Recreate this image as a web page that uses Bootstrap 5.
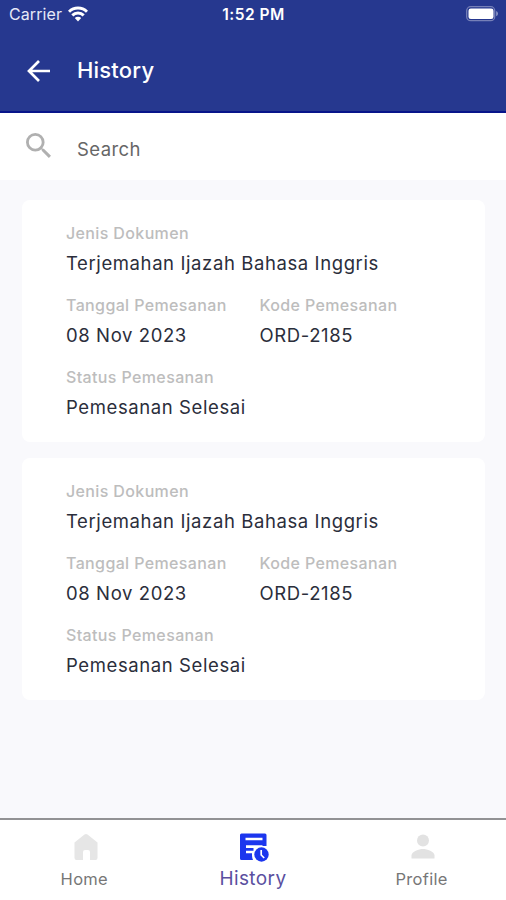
<!DOCTYPE html>
<html lang="id">
<head>
<meta charset="utf-8">
<meta name="viewport" content="width=device-width, initial-scale=1">
<title>History</title>
<link href="https://cdn.jsdelivr.net/npm/bootstrap@5.3.0/dist/css/bootstrap.min.css" rel="stylesheet">
<style>
body{font-family:Inter,"Liberation Sans",sans-serif;background:#f9f9fc;height:900px;overflow:hidden}
svg{display:block;flex:none}
.top-area{background:#26388f;height:113px;border-bottom:2px solid #07148a}
.status-bar{height:28px;padding:0 8px 0 9px;font-size:16px;line-height:28px}
.status-bar>div{flex:1 1 0}
.carrier{letter-spacing:.08px;color:#e6e9f8}
.carrier svg{margin-left:6px}
.clock{font-size:15.5px;letter-spacing:.5px;padding-top:1px}
.title-bar{height:85px;padding:0 26px}
.title-bar h1{font-size:22px;font-weight:500;letter-spacing:.2px;margin:0 0 1px 26px;line-height:28px}
.search-row{height:67px;padding:4px 26px 0}
.search-row svg{margin-bottom:6px}
.search-row input{font-size:18.5px;letter-spacing:.4px;margin-left:26px;color:#666;line-height:24px}
.search-row input::placeholder{color:#666;opacity:1}
.orders{padding:20px 21px 0 22px;gap:16px}
.order{height:242px;border-radius:8px;padding:21.4px 20px 0 44px;color:#2b2e3b}
.field{height:71.6px}
.field dt{font-size:16px;line-height:24px;font-weight:500;letter-spacing:.37px;color:#bdbdbd}
.field dd{font-size:18.5px;line-height:36px;letter-spacing:.6px;margin:0}
.field-date{width:193.5px}
.bottom-nav{height:82px;border-top:2px solid #929294;font-size:16.5px;color:#777}
.bottom-nav a{color:inherit;padding-top:12px;letter-spacing:.3px}
.bottom-nav span{line-height:24px;margin-top:5px}
.bottom-nav a.active{color:#5a4fa0;font-size:19px;letter-spacing:.4px}
.bottom-nav a.active span{margin-top:3px}
.bottom-nav a.active svg{margin-left:3px}
.bottom-nav a:not(.active) svg{margin-left:3px}
</style>
<script src="https://cdn.jsdelivr.net/npm/bootstrap@5.3.0/dist/js/bootstrap.bundle.min.js"></script>
</head>
<body class="d-flex flex-column">
<header class="top-area text-white flex-shrink-0">
  <div class="status-bar d-flex align-items-center">
    <div class="carrier d-flex align-items-center"><span>Carrier</span>
      <svg width="20" height="16" viewBox="0 0 20 16" fill="none" stroke="#fff" stroke-width="3"><path d="M1 5.800a12.800 12.800 0 0 1 18 0M4.300 9.400a8.200 8.200 0 0 1 11.400 0"/><path d="M10 15.400 6.800 12.100a4.600 4.600 0 0 1 6.400 0z" fill="#fff" stroke="none"/></svg>
    </div>
    <div class="clock text-center fw-semibold">1:52 PM</div>
    <div class="d-flex justify-content-end"><svg width="32" height="16" viewBox="0 0 32 16"><rect x=".7" y=".7" width="28" height="14" rx="4" fill="none" stroke="#7680b8" stroke-width="1.3"/><rect x="2.500" y="2.500" width="25" height="10.500" rx="2.300" fill="#fff"/><path d="M30.300 5v5.300q1.500-.8 1.500-2.600T30.300 5z" fill="#a0a8d0"/></svg></div>
  </div>
  <div class="title-bar d-flex align-items-center">
    <svg width="25" height="24" viewBox="0 0 25 24" fill="none" stroke="#fff" stroke-width="2.700"><path d="M24 12H3M13 2 3 12l10 10"/></svg>
    <h1>History</h1>
  </div>
</header>
<div class="search-row bg-white d-flex align-items-center flex-shrink-0">
  <svg width="25" height="25" viewBox="3 3 17.500 17.500" fill="#b0b0b0"><path d="M15.500 14h-.79l-.28-.27A6.470 6.470 0 0 0 16 9.500 6.500 6.500 0 1 0 9.500 16c1.610 0 3.090-.59 4.230-1.570l.27.28v.79l5 4.990L20.490 19l-4.990-5zm-6 0C7.010 14 5 11.990 5 9.500S7.010 5 9.500 5 14 7.010 14 9.500 11.990 14 9.500 14z"/></svg>
  <input class="border-0 bg-transparent p-0 flex-grow-1" type="text" placeholder="Search" aria-label="Search">
</div>
<main class="orders d-flex flex-column flex-grow-1">
  <article class="order bg-white">
    <dl class="m-0">
      <div class="field"><dt>Jenis Dokumen</dt><dd>Terjemahan Ijazah Bahasa Inggris</dd></div>
      <div class="d-flex"><div class="field field-date"><dt>Tanggal Pemesanan</dt><dd>08 Nov 2023</dd></div><div class="field"><dt>Kode Pemesanan</dt><dd>ORD-2185</dd></div></div>
      <div class="field"><dt>Status Pemesanan</dt><dd>Pemesanan Selesai</dd></div>
    </dl>
  </article>
  <article class="order bg-white">
    <dl class="m-0">
      <div class="field"><dt>Jenis Dokumen</dt><dd>Terjemahan Ijazah Bahasa Inggris</dd></div>
      <div class="d-flex"><div class="field field-date"><dt>Tanggal Pemesanan</dt><dd>08 Nov 2023</dd></div><div class="field"><dt>Kode Pemesanan</dt><dd>ORD-2185</dd></div></div>
      <div class="field"><dt>Status Pemesanan</dt><dd>Pemesanan Selesai</dd></div>
    </dl>
  </article>
</main>
<nav class="bottom-nav bg-white d-flex flex-shrink-0">
  <a href="#" class="col-4 d-flex flex-column align-items-center text-decoration-none">
    <svg width="30" height="30" viewBox="0 0 30 30" fill="#e6e6e6"><path d="M3.500 10.500 13.500 2.500q1.500-1.200 3 0l10 8V26q0 2-2 2H19v-8q0-2-2-2h-3q-2 0-2 2v8H5.500q-2 0-2-2z"/></svg>
    <span>Home</span></a>
  <a href="#" class="active col-4 d-flex flex-column align-items-center text-decoration-none" aria-current="page">
    <svg width="32" height="32" viewBox="0 0 32 32"><path fill="#1c36ee" fill-rule="evenodd" d="M3.500 1.500h23.500q1.500 0 1.500 1.500v11h-4v-.7H8v2.700h7.500v2.700H8v2.500h6v2.300q0 1.800 1 4.500H3.500Q2 28 2 26.500V3q0-1.500 1.500-1.500zM7.500 5.700v2.500h17V5.700z"/><circle cx="23.500" cy="22.500" r="8.300" fill="#fff"/><circle cx="23.500" cy="22.500" r="7.200" fill="#1c36ee"/><path d="M23.200 18v5l3 3" fill="none" stroke="#fff" stroke-width="1.700"/></svg>
    <span>History</span></a>
  <a href="#" class="col-4 d-flex flex-column align-items-center text-decoration-none">
    <svg width="30" height="30" viewBox="0 0 30 30" fill="#e2e2e2"><circle cx="15" cy="8.500" r="6"/><path d="M3.500 26.500v-3c0-4 7.500-6.500 11.500-6.500s11.500 2.500 11.500 6.500v3z"/></svg>
    <span>Profile</span></a>
</nav>
</body>
</html>
